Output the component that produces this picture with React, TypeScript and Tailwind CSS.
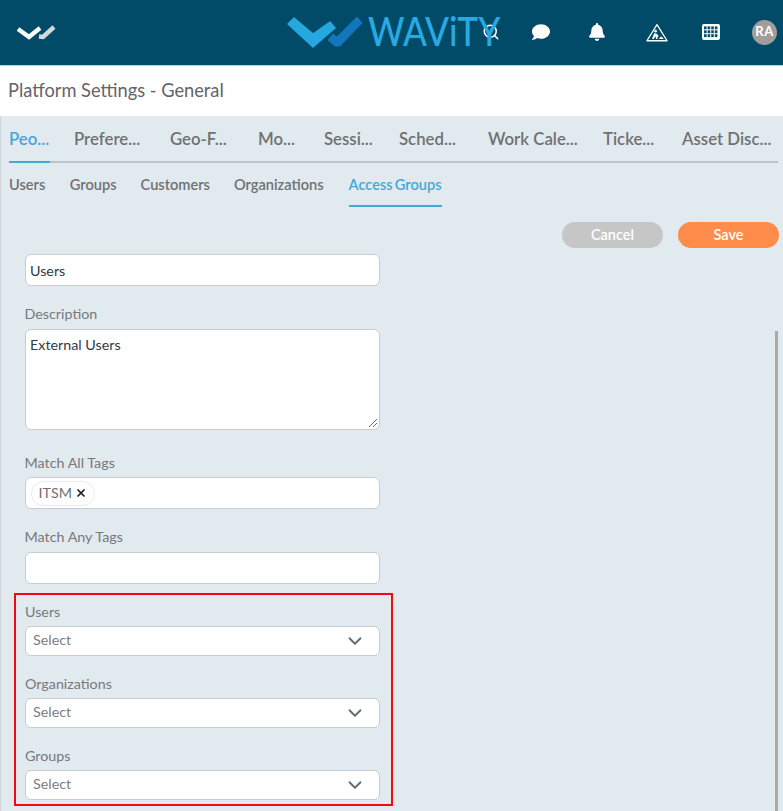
import React from "react";
import { FaBell, FaComment } from "react-icons/fa";
import { Search, ChevronDown, X } from "lucide-react";

const tabs = [
  { t: "Peo...", w: "w-[41px]", ml: "ml-0", active: true },
  { t: "Prefere...", w: "w-[70px]", ml: "ml-[24px]" },
  { t: "Geo-F...", w: "w-[58px]", ml: "ml-[26px]" },
  { t: "Mo...", w: "w-[38px]", ml: "ml-[30px]" },
  { t: "Sessi...", w: "w-[50px]", ml: "ml-[28px]" },
  { t: "Sched...", w: "w-[57px]", ml: "ml-[25px]" },
  { t: "Work Cale...", w: "w-[91px]", ml: "ml-[32px]" },
  { t: "Ticke...", w: "w-[52px]", ml: "ml-[24px]" },
  { t: "Asset Disc...", w: "w-[89px]", ml: "ml-[27px]" },
];

const subTabs = [
  { t: "Users", ml: "ml-0" },
  { t: "Groups", ml: "ml-[24.5px]" },
  { t: "Customers", ml: "ml-[24px]" },
  { t: "Organizations", ml: "ml-[24px]" },
  { t: "Access Groups", ml: "ml-[25px]", active: true },
];

function SelectField({ label, className }: { label: string; className: string }) {
  return (
    <div className={className}>
      <div className="h-[20px] text-[14.3px] leading-[20px] text-[#78797b]">{label}</div>
      <div className="mt-[4px] flex h-[30px] items-center justify-between rounded-[6px] border border-[#c8cccf] bg-white pl-[7px] pr-[13px]">
        <span className="-mt-[3px] text-[14.3px] text-[#7b7d80]">Select</span>
        <ChevronDown size={22} strokeWidth={2} className="text-[#5f6a78]" />
      </div>
    </div>
  );
}

function TextLabel({ children, className }: { children: React.ReactNode; className: string }) {
  return <div className={"h-[20px] text-[14.3px] leading-[20px] text-[#78797b] " + className}>{children}</div>;
}

const gridCells = [0, 1, 2, 3].flatMap((c) => [0, 1, 2].map((r) => ({ c, r })));

export default function App() {
  return (
    <div className="relative h-[811px] w-[783px] overflow-hidden bg-[#e1eaef] font-['Lato',_sans-serif]">
      <header className="relative flex h-[66px] items-center border-b border-[#a9d6ee] bg-[#024b68] pb-[1px]">
        <svg width="42" height="16" viewBox="0 0 42 16" className="ml-[16px]">
          <path d="M2 5 L13 13 L24 4" fill="none" stroke="#ffffff" strokeWidth="4.4" />
          <path d="M23 12.5 L27 13 L38 3" fill="none" stroke="#d5d8da" strokeWidth="4.4" />
        </svg>
        <div className="ml-auto flex items-center pr-[6px]">
          <Search size={18} strokeWidth={2} className="text-white" />
          <FaComment size={18} className="ml-[32px] text-white" />
          <FaBell size={18} className="ml-[38px] text-white" />
          <svg width="22" height="19" viewBox="0 0 24 20" className="ml-[40px]">
            <path d="M12 1.5 L23 19 L1 19 Z" fill="none" stroke="#ffffff" strokeWidth="1.4" strokeLinejoin="round" />
            <circle cx="10.5" cy="8.5" r="1.4" fill="#ffffff" />
            <path d="M6.5 17 L9 10.5 L12 11.5 L14 14 L12.5 14.5 L12.5 17 L11 17 L10.5 14 L8.5 17 Z" fill="#ffffff" />
            <path d="M14 17 L16.5 14 L19.5 17 Z" fill="#ffffff" />
          </svg>
          <svg width="18" height="16" viewBox="0 0 18 16" className="ml-[34px]">
            <rect x="0" y="0" width="18" height="16" rx="2" fill="#ffffff" />
            {gridCells.map(({ c, r }) => (
              <rect key={`${c}-${r}`} x={2 + c * 3.6} y={2.4 + r * 3.9} width="2.6" height="2.9" fill="#024b68" />
            ))}
          </svg>
          <div className="ml-[32px] flex h-[25px] w-[25px] items-center justify-center rounded-full bg-[#a29d9b] text-[13px] font-bold tracking-[0.5px] text-white">RA</div>
        </div>
        <div className="absolute left-[286px] top-[13px] flex h-[36px] items-center">
          <svg width="78" height="36" viewBox="0 0 78 36">
            <path d="M2 11 L8 5 L27 21 L44 9 L49 15 L27 34 Z" fill="#25a8e0" stroke="#25a8e0" strokeWidth="1.5" strokeLinejoin="round" />
            <path d="M42 27 L47 21 L51 24 L71 4 L76 10 L54 33 L49 33 Z" fill="#1276bd" stroke="#1276bd" strokeWidth="1" strokeLinejoin="round" />
          </svg>
          <span className="ml-[4px] origin-left scale-x-[0.857] text-[41px] font-medium leading-[36px] text-[#29a9e1]">WAViTY</span>
        </div>
      </header>
      <div className="flex h-[50px] items-center bg-white pb-[1px] pl-[8px] text-[18.25px] text-[#636467]">Platform Settings - General</div>

      <main className="relative h-[695px] border-l border-[#cdd3d7] pl-[8px]">
        <nav className="mr-[5px] flex h-[47px] border-b-2 border-[#bcc3c7] pt-[10px]">
          {tabs.map((tab) => (
            <div
              key={tab.t}
              className={`${tab.ml} ${tab.w} -mb-[2px] h-[37px] whitespace-nowrap text-[16.8px] font-semibold leading-[26px] ${
                tab.active ? "border-b-2 border-[#44a8d8] text-[#44a8d8]" : "text-[#707173]"
              }`}
            >
              {tab.t}
            </div>
          ))}
        </nav>
        <nav className="flex h-[44px] pt-[12px]">
          {subTabs.map((tab) => (
            <div
              key={tab.t}
              className={`${tab.ml} h-[32px] whitespace-nowrap text-[14.6px] font-semibold leading-[20px] ${
                tab.active ? "border-b-2 border-[#44a8d8] text-[#44a8d8] [word-spacing:-1.5px]" : "text-[#707173]"
              }`}
            >
              {tab.t}
            </div>
          ))}
        </nav>
        <div className="mt-[15px] flex h-[26px] justify-end gap-[15px] pr-[4px]">
          <div className="flex h-[26px] w-[101px] items-center justify-center rounded-full bg-[#c6c6c6] text-[14.5px] font-semibold text-white">Cancel</div>
          <div className="flex h-[26px] w-[101px] items-center justify-center rounded-full bg-[#ff8c4a] text-[14.5px] font-semibold text-white">Save</div>
        </div>

        <div className="ml-[16px] mt-[6px] w-[355px]">
          <div className="flex h-[32px] items-center rounded-[6px] border border-[#c8cccf] bg-white pl-[4px] pt-[1px] text-[14.3px] text-[#333a42]">Users</div>
          <TextLabel className="mt-[18px] -ml-[0.5px]">Description</TextLabel>
          <div className="relative mt-[5px] h-[101px] rounded-[6px] border border-[#c8cccf] bg-white pl-[4px] pt-[5px] text-[14.3px] leading-[20px] text-[#333a42]">
            External Users
            <svg width="10" height="10" viewBox="0 0 10 10" className="absolute bottom-[1px] right-[1px]">
              <path d="M1 9 L9 1 M5 9 L9 5" stroke="#6b6b6b" strokeWidth="1" />
            </svg>
          </div>
          <TextLabel className="mt-[23px] -ml-[0.5px]">Match All Tags</TextLabel>
          <div className="mt-[4px] flex h-[32px] items-center rounded-[6px] border border-[#c8cccf] bg-white pl-[4.5px]">
            <div className="flex h-[25px] w-[64px] items-center rounded-full border border-[#ebebeb] pl-[7px] text-[14.3px] text-[#707173]">
              ITSM
              <X size={12} strokeWidth={3.5} className="ml-[3px] text-[#222222]" />
            </div>
          </div>
          <TextLabel className="mt-[18px] -ml-[0.5px]">Match Any Tags</TextLabel>
          <div className="mt-[5px] h-[32px] rounded-[6px] border border-[#c8cccf] bg-white" />
        </div>

        <div className="ml-[5px] mt-[9px] h-[213px] w-[379px] border-2 border-[#f5070f] pl-[9px] pr-[11px]">
          <SelectField label="Users" className="mt-[7px]" />
          <SelectField label="Organizations" className="mt-[18px]" />
          <SelectField label="Groups" className="mt-[18px]" />
        </div>

        <div className="absolute right-[5px] top-[215px] h-[480px] w-[3px] bg-[#a9a9a9]" />
      </main>
    </div>
  );
}
